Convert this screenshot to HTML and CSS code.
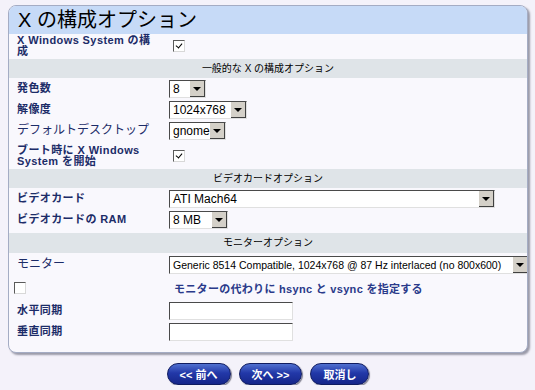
FILE: index.html
```html
<!DOCTYPE html>
<html>
<head>
  <title>X の構成オプション</title>
  <link rel="stylesheet" href="styles.css">
</head>
<body>
  <div class="panel">
    <h1 class="title">X の構成オプション</h1>

    <div class="row tall">
      <label class="label">X Windows System の構成</label>
      <div class="field"><span class="check on"></span></div>
    </div>

    <div class="section">一般的な X の構成オプション</div>

    <div class="row">
      <label class="label">発色数</label>
      <div class="field"><span class="select w-depth"><span class="value">8</span><span class="arrow"></span></span></div>
    </div>
    <div class="row">
      <label class="label">解像度</label>
      <div class="field"><span class="select w-res"><span class="value">1024x768</span><span class="arrow"></span></span></div>
    </div>
    <div class="row">
      <label class="label plain">デフォルトデスクトップ</label>
      <div class="field"><span class="select w-desk"><span class="value">gnome</span><span class="arrow"></span></span></div>
    </div>
    <div class="row tall boot">
      <label class="label">ブート時に X Windows System を開始</label>
      <div class="field"><span class="check on"></span></div>
    </div>

    <div class="section">ビデオカードオプション</div>

    <div class="row">
      <label class="label">ビデオカード</label>
      <div class="field"><span class="select w-card"><span class="value">ATI Mach64</span><span class="arrow"></span></span></div>
    </div>
    <div class="row">
      <label class="label">ビデオカードの RAM</label>
      <div class="field"><span class="select w-ram"><span class="value">8 MB</span><span class="arrow"></span></span></div>
    </div>

    <div class="section monitor">モニターオプション</div>

    <div class="row">
      <label class="label plain">モニター</label>
      <div class="field"><span class="select w-mon"><span class="value">Generic 8514 Compatible, 1024x768 @ 87 Hz interlaced (no 800x600)</span><span class="arrow"></span></span></div>
    </div>
    <div class="row sync">
      <span class="check"></span>
      <span class="sync-text">モニターの代わりに hsync と vsync を指定する</span>
    </div>
    <div class="row">
      <label class="label">水平同期</label>
      <div class="field"><span class="text-input"></span></div>
    </div>
    <div class="row">
      <label class="label">垂直同期</label>
      <div class="field"><span class="text-input"></span></div>
    </div>
  </div>

  <div class="buttons">
    <button class="nav">&lt;&lt; 前へ</button>
    <button class="nav">次へ &gt;&gt;</button>
    <button class="nav">取消し</button>
  </div>
</body>
</html>
```

FILE: styles.css
```css
body {
  margin: 0;
  padding: 5px 7px 0 8px;
  background: #f4f2fa;
  font-family: "Liberation Sans", "Noto Sans CJK JP", sans-serif;
  color: #000;
}
.panel {
  background: #f9f8fd;
  border: 1px solid #a4acc4;
  border-radius: 8px;
  box-shadow: 2px 2px 2px #9a9aa8;
  padding-bottom: 10px;
  overflow: hidden;
}
.title {
  margin: 0;
  background: #c6daf7;
  font-size: 20px;
  font-weight: normal;
  line-height: 28px;
  padding-left: 9px;
}
.row {
  display: flex;
  align-items: center;
  min-height: 21px;
  padding-left: 8px;
}
.row.tall {
  min-height: 24px;
}
.row.boot {
  padding-top: 3px;
}
.label {
  width: 138px;
  margin-right: 14px;
  flex-shrink: 0;
  font-size: 11px;
  font-weight: bold;
  line-height: 11px;
  color: #1c2c68;
  letter-spacing: 0.4px;
}
.label.plain {
  font-weight: normal;
  font-size: 12px;
  letter-spacing: 0;
  white-space: nowrap;
}
.field {
  display: flex;
  align-items: center;
}
.section {
  background: #dfe4e8;
  text-align: center;
  font-size: 10px;
  line-height: 19px;
  margin: 1px 0 0;
}
.section.monitor {
  line-height: 20px;
  margin: 3px 0 1px;
}
.check {
  display: inline-block;
  width: 10px;
  height: 10px;
  background: #fff;
  border: 1px solid #5a5a5a;
  border-right-color: #d8d8d8;
  border-bottom-color: #d8d8d8;
  margin-left: 4px;
  position: relative;
}
.check.on::after {
  content: "";
  position: absolute;
  left: 3px;
  top: 1px;
  width: 3px;
  height: 5px;
  border: solid #000;
  border-width: 0 1.5px 1.5px 0;
  transform: rotate(40deg);
}
.select {
  display: inline-flex;
  align-items: center;
  height: 18px;
  background: #fff;
  border: 1px solid #4a4a4a;
  border-right-color: #e0e0e0;
  border-bottom-color: #e0e0e0;
  font-size: 12px;
  box-sizing: border-box;
}
.select .value {
  flex: 1;
  padding-left: 3px;
  white-space: nowrap;
  overflow: hidden;
}
.select .arrow {
  width: 15px;
  height: 16px;
  background: #d4d0c8;
  border-right: 1px solid #404040;
  border-bottom: 1px solid #404040;
  box-sizing: border-box;
  position: relative;
}
.select .arrow::after {
  content: "";
  position: absolute;
  left: 3px;
  top: 6px;
  border-left: 4px solid transparent;
  border-right: 4px solid transparent;
  border-top: 4px solid #000;
}
.w-depth { width: 37px; }
.w-res { width: 78px; }
.w-desk { width: 57px; }
.w-card { width: 326px; }
.w-ram { width: 59px; }
.w-mon { width: 360px; }
.w-mon .value {
  font-size: 10.5px;
}
.sync {
  padding-left: 2px;
  min-height: 25px;
}
.sync .check {
  margin-left: 3px;
}
.sync-text {
  margin-left: 148px;
  font-size: 11px;
  font-weight: bold;
  color: #2a3a8a;
  letter-spacing: 0.3px;
}
.text-input {
  display: inline-block;
  width: 124px;
  height: 18px;
  background: #fff;
  border: 1px solid #4a4a4a;
  border-right-color: #e0e0e0;
  border-bottom-color: #e0e0e0;
  box-sizing: border-box;
}
.buttons {
  display: flex;
  justify-content: center;
  gap: 8px;
  padding: 10px 0 0 0;
}
.nav {
  height: 22px;
  padding: 0 12px;
  border: 1px solid #101c60;
  border-radius: 11px;
  background: linear-gradient(#5070d0, #2238a8 45%, #16268a);
  color: #fff;
  font-family: "Liberation Sans", "Noto Sans CJK JP", sans-serif;
  font-size: 11px;
  font-weight: bold;
  box-shadow: 1px 1px 1px #808090;
}
```
